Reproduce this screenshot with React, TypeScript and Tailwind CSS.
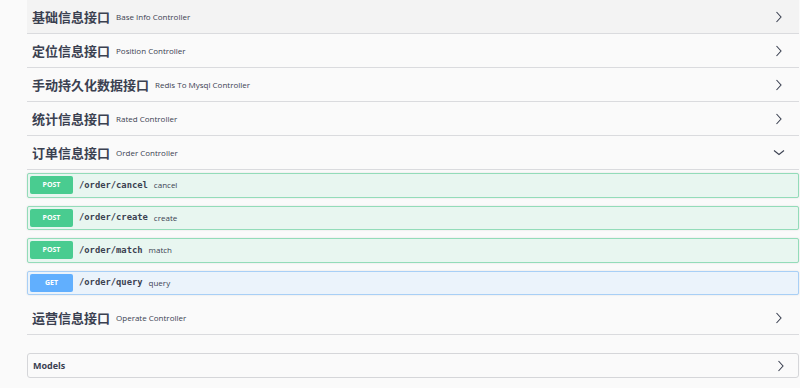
const ink = "text-[#3b4151]";

function Chevron({ down = false }: { down?: boolean }) {
  return (
    <svg width="12" height="12" viewBox="0 0 12 12" className="shrink-0">
      {down ? (
        <polyline points="1,3.5 6,7.5 11,3.5" fill="none" stroke="#3b4151" strokeWidth="1.1" />
      ) : (
        <polyline points="3.5,1 8,6 3.5,11" fill="none" stroke="#3b4151" strokeWidth="1.1" />
      )}
    </svg>
  );
}

interface TagProps {
  title: string;
  desc: string;
  open?: boolean;
  hover?: boolean;
}

function TagHeader({ title, desc, open, hover }: TagProps) {
  return (
    <div
      className={`flex h-[34px] items-center border-b border-[#dadbde] pl-[5px] pr-[14px] ${hover ? "bg-[#f3f3f3]" : ""}`}
    >
      <span className={`font-['Noto_Sans_CJK_SC',sans-serif] text-[13px] font-bold ${ink}`}>{title}</span>
      <span className={`ml-[6px] font-['Open_Sans',sans-serif] text-[8px] ${ink}`}>{desc}</span>
      <div className="flex-1" />
      <Chevron down={open} />
    </div>
  );
}

interface Op {
  method: "POST" | "GET";
  path: string;
  summary: string;
}

function OpBlock({ method, path, summary }: Op) {
  const post = method === "POST";
  return (
    <div
      className={`flex h-[24.5px] items-center rounded-[2px] border pl-[2px] shadow-[0_0_2px_rgba(0,0,0,0.12)] ${
        post ? "border-[#93dcb9] bg-[#e8f6f0]" : "border-[#a8cff6] bg-[#ebf3fb]"
      }`}
    >
      <span
        className={`flex h-[18px] w-[43px] items-center justify-center rounded-[2px] font-['Open_Sans',sans-serif] text-[7px] font-bold text-white ${
          post ? "bg-[#49cc90]" : "bg-[#61affe]"
        }`}
      >
        {method}
      </span>
      <span className={`ml-[6px] font-['DejaVu_Sans_Mono',monospace] text-[8.8px] font-bold ${ink}`}>{path}</span>
      <span className={`ml-[6px] font-['Open_Sans',sans-serif] text-[8px] ${ink}`}>{summary}</span>
    </div>
  );
}

const ops: Op[] = [
  { method: "POST", path: "/order/cancel", summary: "cancel" },
  { method: "POST", path: "/order/create", summary: "create" },
  { method: "POST", path: "/order/match", summary: "match" },
  { method: "GET", path: "/order/query", summary: "query" },
];

export default function App() {
  return (
    <div className="min-h-[388px] w-[800px] bg-[#fafafa] pl-[27px] pr-px">
      <TagHeader title="基础信息接口" desc="Base Info Controller" hover />
      <TagHeader title="定位信息接口" desc="Position Controller" />
      <TagHeader title="手动持久化数据接口" desc="Redis To Mysql Controller" />
      <TagHeader title="统计信息接口" desc="Rated Controller" />
      <TagHeader title="订单信息接口" desc="Order Controller" open />
      <div className="mt-[3px] flex flex-col gap-[8px]">
        {ops.map((op) => (
          <OpBlock key={op.path} {...op} />
        ))}
      </div>
      <div className="mt-[6px]">
        <TagHeader title="运营信息接口" desc="Operate Controller" />
      </div>
      <div className="mt-[18px] flex h-[25px] items-center rounded-[3px] border border-[#d5d6d9] pl-[5px] pr-[11px]">
        <span className={`font-['Open_Sans',sans-serif] text-[9px] font-bold ${ink}`}>Models</span>
        <div className="flex-1" />
        <Chevron />
      </div>
    </div>
  );
}
